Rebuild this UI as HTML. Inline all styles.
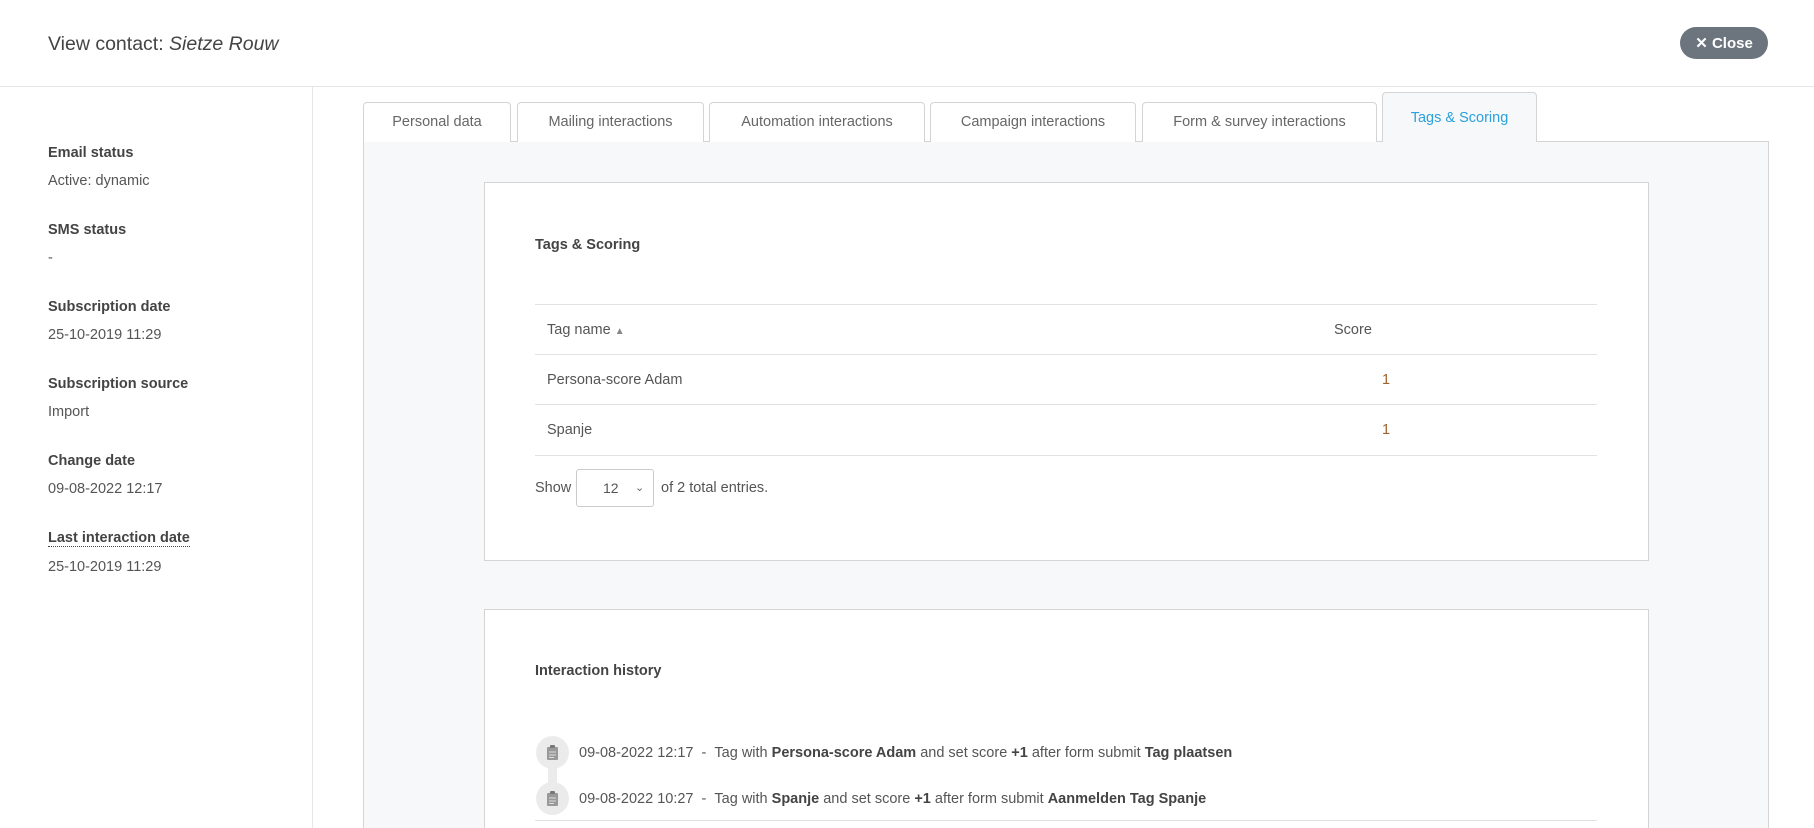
<!DOCTYPE html>
<html><head><meta charset="utf-8"><style>
*{box-sizing:border-box;margin:0;padding:0}
html{width:1814px;height:828px;overflow:hidden}
body{width:1814px;height:828px;overflow:hidden;background:#fff;font-family:"Liberation Sans",sans-serif;color:#555;font-size:14.5px;position:relative}
.a{position:absolute;white-space:nowrap}
.hdr{position:absolute;left:0;top:0;width:1814px;height:87px;border-bottom:1px solid #e6e6e6}
.title{left:48px;top:33px;font-size:19.5px;color:#444}
.close{left:1680px;top:27px;width:88px;height:32px;border-radius:16px;background:#6c757d;color:#fff;font-size:15px;line-height:33px;text-align:center;font-weight:bold}
.side{position:absolute;left:312px;top:87px;width:1px;height:741px;background:#e6e6e6}
.lbl{color:#444;font-weight:bold;left:48px}
.val{left:48px;color:#555}
.tab{position:absolute;top:102px;height:40px;border:1px solid #d4d4d4;border-bottom:none;border-radius:4px 4px 0 0;background:#fff;text-align:center;line-height:38px;color:#666;font-size:14.5px}
.panel{position:absolute;left:363px;top:141px;width:1406px;height:700px;background:#f7f8fa;border:1px solid #d4d4d4;border-bottom:none}
.card{position:absolute;left:484px;width:1165px;background:#fff;border:1px solid #d4d4d4}
.hl{position:absolute;left:535px;width:1062px;height:1px;background:#e2e2e2}
.b{font-weight:bold;color:#444}
.circ{position:absolute;left:536px;width:33px;height:33px;border-radius:50%;background:#ebebeb}
</style></head><body>
<div class="hdr"></div>
<div class="a title">View contact: <i>Sietze Rouw</i></div>
<div class="a close">✕ Close</div>
<div class="side"></div>
<div class="a lbl" style="top:145px">Email status</div>
<div class="a val" style="top:173px">Active: dynamic</div>
<div class="a lbl" style="top:222px">SMS status</div>
<div class="a val" style="top:250px">-</div>
<div class="a lbl" style="top:299px">Subscription date</div>
<div class="a val" style="top:327px">25-10-2019 11:29</div>
<div class="a lbl" style="top:376px">Subscription source</div>
<div class="a val" style="top:404px">Import</div>
<div class="a lbl" style="top:453px">Change date</div>
<div class="a val" style="top:481px">09-08-2022 12:17</div>
<div class="a lbl" style="top:530px;border-bottom:1px dotted #444">Last interaction date</div>
<div class="a val" style="top:559px">25-10-2019 11:29</div>

<div class="panel"></div>
<div class="tab" style="left:363px;width:148px">Personal data</div>
<div class="tab" style="left:517px;width:187px">Mailing interactions</div>
<div class="tab" style="left:709px;width:216px">Automation interactions</div>
<div class="tab" style="left:930px;width:206px">Campaign interactions</div>
<div class="tab" style="left:1142px;width:235px">Form &amp; survey interactions</div>
<div class="tab" style="left:1382px;width:155px;top:92px;height:50px;background:#f7f8fa;color:#2aa0dc;line-height:50px;z-index:2">Tags &amp; Scoring</div>

<div class="card" style="top:182px;height:379px"></div>
<div class="a b" style="left:535px;top:237px">Tags &amp; Scoring</div>
<div class="hl" style="top:304px"></div>
<div class="a" style="left:547px;top:322px;color:#555">Tag name <span style="font-size:10px;color:#888">▲</span></div>
<div class="a" style="left:1334px;top:322px">Score</div>
<div class="hl" style="top:354px"></div>
<div class="a" style="left:547px;top:372px">Persona-score Adam</div>
<div class="a" style="left:1382px;top:372px;color:#a0622d">1</div>
<div class="hl" style="top:404px"></div>
<div class="a" style="left:547px;top:422px">Spanje</div>
<div class="a" style="left:1382px;top:422px;color:#a0622d">1</div>
<div class="hl" style="top:455px"></div>
<div class="a" style="left:535px;top:480px">Show</div>
<div class="a" style="left:576px;top:469px;width:78px;height:38px;border:1px solid #ccc;border-radius:3px;line-height:36px;padding-left:26px;font-size:14px">12 <span style="position:absolute;left:58px;font-size:11px;color:#666">⌄</span></div>
<div class="a" style="left:661px;top:480px">of 2 total entries.</div>

<div class="card" style="top:609px;height:240px;border-bottom:none"></div>
<div class="a b" style="left:535px;top:663px">Interaction history</div>
<div class="a" style="left:548px;top:760px;width:9px;height:30px;background:#ebebeb"></div>
<div class="circ" style="top:736px"></div>
<div class="circ" style="top:782px"></div>
<svg class="a" style="left:546px;top:745px" width="13" height="15" viewBox="0 0 13 15"><rect x="1" y="2" width="11" height="13" rx="1" fill="#999"/><rect x="4" y="0" width="5" height="3" rx="1" fill="#777"/><path d="M3 7h7M3 10h7M3 12.5h5" stroke="#ddd" stroke-width="1"/></svg>
<svg class="a" style="left:546px;top:791px" width="13" height="15" viewBox="0 0 13 15"><rect x="1" y="2" width="11" height="13" rx="1" fill="#999"/><rect x="4" y="0" width="5" height="3" rx="1" fill="#777"/><path d="M3 7h7M3 10h7M3 12.5h5" stroke="#ddd" stroke-width="1"/></svg>
<div class="a" style="left:579px;top:745px">09-08-2022 12:17 &nbsp;- &nbsp;Tag with <span class="b">Persona-score Adam</span> and set score <span class="b">+1</span> after form submit <span class="b">Tag plaatsen</span></div>
<div class="a" style="left:579px;top:791px">09-08-2022 10:27 &nbsp;- &nbsp;Tag with <span class="b">Spanje</span> and set score <span class="b">+1</span> after form submit <span class="b">Aanmelden Tag Spanje</span></div>
<div class="hl" style="top:820px"></div>
</body></html>
